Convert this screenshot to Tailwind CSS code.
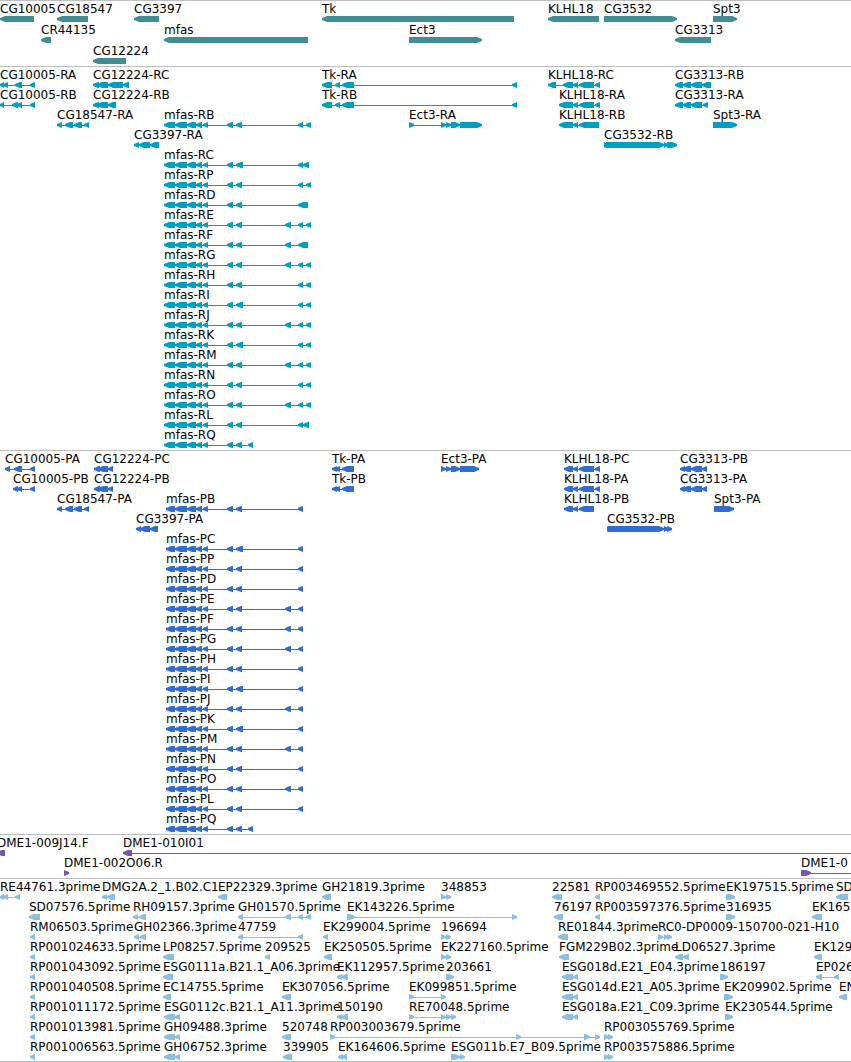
<!DOCTYPE html>
<html lang="en">
<head>
  <meta charset="UTF-8">
  <title>Genome Browser – Region Tracks</title>
  <meta name="viewport" content="width=device-width, initial-scale=1.0">
  <script src="https://cdn.jsdelivr.net/npm/@tailwindcss/browser@4"></script>
</head>
<body class="bg-white font-['DejaVu_Sans',sans-serif] text-xs text-black">

  <main class="w-full overflow-hidden border-b border-[#bfbfbf]">
    <section id="genes" aria-label="Genes" class="flex flex-col gap-px border-t border-[#bfbfbf] pt-px pb-0.5 text-[#408e93]"></section>
    <section id="transcripts" aria-label="Transcripts" class="flex flex-col border-t border-[#bfbfbf] pt-px pb-0.5 text-[#009fc1]"></section>
    <section id="proteins" aria-label="Coding sequences" class="flex flex-col border-t border-[#bfbfbf] pt-px pb-0.5 text-[#316dd1]"></section>
    <section id="clones" aria-label="BAC ends" class="flex flex-col border-t border-[#bfbfbf] pt-px pb-0.5 text-[#7a56a9]"></section>
    <section id="ests" aria-label="ESTs" class="flex flex-col border-t border-[#bfbfbf] py-px text-[#8bbfdf]"></section>
  </main>

  <script>
  // Feature: "name | strand | start-end start-end ..."
  // an end past the window keeps the intron line running off the edge
  const mfasR = "164-175 175-187 187-196 196-202 203-208 227-233";
  const mfasP = "166-175 175-187 187-196 196-202 203-208 227-233";
  const klhl = "573-578 579-594 595-600";

  const tracks = {
    genes: [
      ["CG10005|-|0-34", "CG18547|-|57-88", "CG3397|-|134-159", "Tk|-|322-514", "KLHL18|-|548-599", "CG3532|+|604-677", "Spt3|+|713-737"],
      ["CR44135|-|41-51", "mfas|-|164-308", "Ect3|+|409-482", "CG3313|-|675-711"],
      ["CG12224|-|93-126"]
    ],
    transcripts: [
      ["CG10005-RA|-|0-4 3-8 15-22 30-35", "CG12224-RC|-|93-99 97-108 108-123 123-129", "Tk-RA|-|322-332 335-340 342-354 512-517", `KLHL18-RC|-|548-556 563-573 ${klhl}`, "CG3313-RB|-|675-683 683-691 691-702 702-711"],
      ["CG10005-RB|-|0-4 12-18 17-22 30-35", "CG12224-RB|-|93-99 97-108 108-116", "Tk-RB|-|322-332 335-340 342-354 512-517", `KLHL18-RA|-|559-573 ${klhl}`, "CG3313-RA|-|675-683 683-691 691-702 703-708"],
      ["CG18547-RA|-|57-62 65-73 74-82 84-89", `mfas-RB|-|${mfasR} 236-242 298-303 306-311`, "Ect3-RA|+|409-414 441-446 446-451 451-460 460-482", "KLHL18-RB|-|559-573 573-578 579-599", "Spt3-RA|+|713-737"],
      ["CG3397-RA|-|134-139 139-150 150-159", "CG3532-RB|+|604-608 606-664 664-668 667-677"],
      [`mfas-RC|-|${mfasR} 236-243 298-303 303-309`],
      [`mfas-RP|-|${mfasR} 236-242 298-303 306-311`],
      [`mfas-RD|-|${mfasR} 236-242 298-308`],
      [`mfas-RE|-|${mfasR} 236-242 285-291 298-303 306-311`],
      [`mfas-RF|-|${mfasR} 236-242 285-291 298-308`],
      [`mfas-RG|-|${mfasR} 236-242 285-291 298-303 306-311`],
      [`mfas-RH|-|${mfasR} 236-242 298-303 306-311`],
      [`mfas-RI|-|${mfasR} 236-243 298-303 306-311`],
      [`mfas-RJ|-|${mfasR} 236-242 285-291 298-303 306-311`],
      [`mfas-RK|-|${mfasR} 236-243 298-303 306-311`],
      [`mfas-RM|-|${mfasR} 236-242 285-291 298-303 306-311`],
      [`mfas-RN|-|${mfasR} 236-242 298-303 306-311`],
      [`mfas-RO|-|${mfasR} 236-242 285-291 298-303 306-311`],
      [`mfas-RL|-|${mfasR} 236-242 298-303 303-309`],
      [`mfas-RQ|-|${mfasR} 236-242 248-253`]
    ],
    proteins: [
      ["CG10005-PA|-|5-10 14-22 30-35", "CG12224-PC|-|94-100 98-108 108-113", "Tk-PA|-|332-337 335-340 342-354", "Ect3-PA|+|441-446 446-451 451-460 460-479", `KLHL18-PC|-|564-573 ${klhl}`, "CG3313-PB|-|680-685 683-691 691-702 702-707"],
      ["CG10005-PB|-|13-18 17-22 30-35", "CG12224-PB|-|94-100 98-108 108-113", "Tk-PB|-|332-337 335-340 342-354", `KLHL18-PA|-|564-573 ${klhl}`, "CG3313-PA|-|680-685 683-691 691-702 702-707"],
      ["CG18547-PA|-|57-62 65-73 74-82 84-89", `mfas-PB|-|${mfasP} 236-242 298-303`, "KLHL18-PB|-|564-573 573-578 579-594", "Spt3-PA|+|714-734"],
      ["CG3397-PA|-|136-141 140-150 150-158", "CG3532-PB|+|607-610 608-664 664-668 667-672"],
      [`mfas-PC|-|${mfasP} 236-243 298-303`],
      [`mfas-PP|-|${mfasP} 236-242 298-303`],
      [`mfas-PD|-|${mfasP} 236-242 298-303`],
      [`mfas-PE|-|${mfasP} 236-242 285-291 298-303`],
      [`mfas-PF|-|${mfasP} 236-242 285-291 298-303`],
      [`mfas-PG|-|${mfasP} 236-242 285-291 298-303`],
      [`mfas-PH|-|${mfasP} 236-242 298-303`],
      [`mfas-PI|-|${mfasP} 236-243 298-303`],
      [`mfas-PJ|-|${mfasP} 236-242 285-291 298-303`],
      [`mfas-PK|-|${mfasP} 236-243 298-303`],
      [`mfas-PM|-|${mfasP} 236-242 285-291 298-303`],
      [`mfas-PN|-|${mfasP} 236-242 298-303`],
      [`mfas-PO|-|${mfasP} 236-242 285-291 298-303`],
      [`mfas-PL|-|${mfasP} 236-242 298-303`],
      [`mfas-PQ|-|${mfasP} 236-242 248-253`]
    ],
    clones: [
      ["DME1-009J14.F|-|-3-5", "DME1-010I01|-|123-132 2400-2410"],
      ["DME1-002O06.R|+|64-69", "DME1-0|+|801-811 2400-2410"]
    ],
    ests: [
      ["RE44761.3prime|-|0-4 3-8 15-20", "DMG2A.2_1.B02.C1|-|102-107 107-115", "EP22329.3prime|-|218-227", "GH21819.3prime|-|322-331", "348853|+|441-446 446-451", "22581|-|552-562", "RP003469552.5prime|-|595-600", "EK197515.5prime|+|726-735", "SD|-|836-848"],
      ["SD07576.5prime|-|29-40", "RH09157.3prime|-|133-138 139-146", "GH01570.5prime|-|238-243 285-291 298-303 306-311", "EK143226.5prime|+|347-355 512-517", "76197|-|554-563", "RP003597376.5prime|-|595-600", "316935|+|726-735", "EK165|-|812-822"],
      ["RM06503.5prime|-|30-35", "GH02366.3prime|-|134-139 140-146", "47759|-|238-243 298-303", "EK299004.5prime|-|323-328", "196694|+|441-446 446-451", "RE01844.3prime|-|558-568", "RC0-DP0009-150700-021-H10|+|658-663 664-668 667-672"],
      ["RP001024633.5prime|-|30-35", "LP08257.5prime|-|163-174", "209525|-|265-270", "EK250505.5prime|-|324-332", "EK227160.5prime|+|441-446 446-451", "FGM229B02.3prime|-|559-569", "LD06527.3prime|-|675-683 683-689", "EK129|-|814-822"],
      ["RP001043092.5prime|-|30-35", "ESG0111a.B21.1_A06.3prime|-|163-173", "EK112957.5prime|-|337-342 341-348", "203661|+|446-454", "ESG018d.E21_E04.3prime|-|562-573 573-578", "186197|+|720-728", "EP026|-|816-822 834-839"],
      ["RP001040508.5prime|-|30-35", "EC14755.5prime|-|163-171", "EK307056.5prime|-|282-291", "EK099851.5prime|+|409-414 441-446", "ESG014d.E21_A05.3prime|-|562-573 573-578", "EK209902.5prime|+|724-733", "EN|-|839-847"],
      ["RP001011172.5prime|-|30-35", "ESG0112c.B21.1_A11.3prime|-|164-175 175-180", "150190|-|337-342 341-348", "RE70048.5prime|+|409-414 441-446 446-451 451-456", "ESG018a.E21_C09.3prime|-|562-573 573-578", "EK230544.5prime|+|725-733"],
      ["RP001013981.5prime|-|30-35", "GH09488.3prime|-|164-175 175-180", "520748|-|282-291", "RP003003679.5prime|+|330-335 516-521 584-590 595-600", "RP003055769.5prime|+|604-609 608-613"],
      ["RP001006563.5prime|-|30-35", "GH06752.3prime|-|164-175 175-180", "339905|-|283-292", "EK164606.5prime|-|338-343 342-347", "ESG011b.E7_B09.5prime|+|451-460 460-465", "RP003575886.5prime|+|604-609 608-613"]
    ]
  };

  // Exon box with a blunt point on the side the strand runs to
  function exonPoints(a, b, strand) {
    const head = Math.min(5, b - a);
    return strand === "-"
      ? `${a},4 ${a},2 ${a + head},0 ${b},0 ${b},6 ${a + head},6`
      : `${b},4 ${b},2 ${b - head},0 ${a},0 ${a},6 ${b - head},6`;
  }

  function feature(item) {
    const [name, strand, spans] = item.split("|");
    const exons = [...spans.matchAll(/(-?\d+)-(\d+)/g)].map(m => [Number(m[1]), Number(m[2])]);
    const start = exons[0][0];
    const width = exons[exons.length - 1][1] - start;
    const shapes = exons.map(([a, b]) => `<polygon points="${exonPoints(a - start, b - start, strand)}"/>`).join("");

    return `
      <div class="absolute top-0 flex flex-col whitespace-nowrap" style="left: ${start}px">
        <span class="h-3.5 leading-3.5 text-black">${name}</span>
        <svg class="block h-1.5 fill-current" width="${width}" height="6" aria-hidden="true">
          <rect x="2" y="3" width="${width - 4}" height="1"/>
          ${shapes}
        </svg>
      </div>`;
  }

  Object.entries(tracks).forEach(([id, rows]) => {
    const track = document.getElementById(id);
    rows.forEach(row => {
      const line = document.createElement("div");
      line.className = "relative h-5";
      line.innerHTML = row.map(feature).join("");
      track.appendChild(line);
    });
  });
  </script>
</body>
</html>
